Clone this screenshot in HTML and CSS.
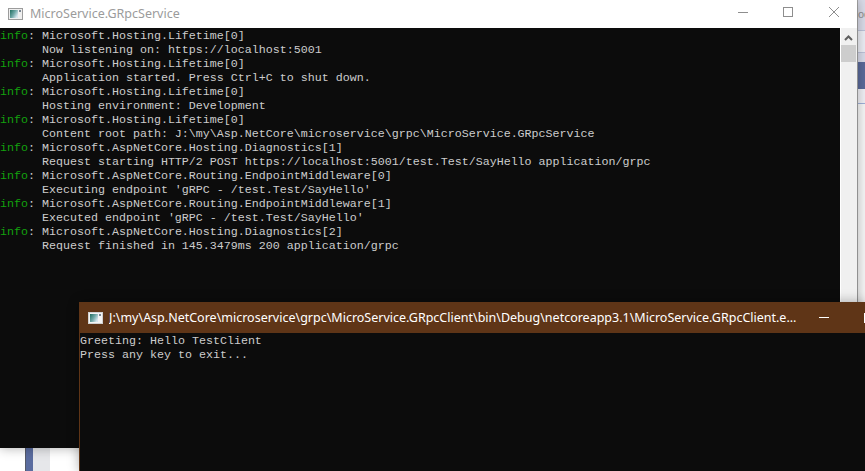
FILE: index.html
```html
<!DOCTYPE html>
<html lang="en">
<head>
<meta charset="utf-8">
<title>Console windows</title>
<link rel="stylesheet" href="styles.css">
</head>
<body>
<div class="desktop">
  <div class="back-strip">
    <span class="back-block block-a"><span class="back-text">oc</span></span>
    <span class="back-block block-b"></span>
    <span class="back-block block-c"></span>
    <span class="back-block block-d"></span>
    <span class="back-block block-e"></span>
  </div>
  <div class="back-bottom">
    <span class="bottom-blue"></span>
    <span class="bottom-grey"></span>
  </div>

  <section class="window service">
    <header class="titlebar service-bar">
      <svg class="app-icon" width="15" height="12" viewBox="0 0 15 12" aria-hidden="true">
        <defs><linearGradient id="icon-a" x1="0" y1="0" x2="1" y2="0.6"><stop offset="0" stop-color="#1f6d5e"/><stop offset="0.55" stop-color="#6fa7a6"/><stop offset="1" stop-color="#d6e6ee"/></linearGradient></defs>
        <rect x="0.5" y="0.5" width="14" height="11" fill="#efefef" stroke="#9c9c9c"/>
        <rect x="2" y="2" width="8" height="8" fill="url(#icon-a)"/>
        <rect x="11" y="2" width="2" height="2" fill="#7b8794"/>
      </svg>
      <span class="title-text">MicroService.GRpcService</span>
      <span class="caption-buttons">
        <svg width="12" height="12" viewBox="0 0 12 12" aria-hidden="true"><path d="M2 6.5H12" stroke="#8e8e8e" fill="none"/></svg>
        <svg width="12" height="12" viewBox="0 0 12 12" aria-hidden="true"><rect x="1.5" y="1.5" width="9" height="9" stroke="#8e8e8e" fill="none"/></svg>
        <svg width="12" height="12" viewBox="0 0 12 12" aria-hidden="true"><path d="M1 1L11 11M11 1L1 11" stroke="#8e8e8e" fill="none"/></svg>
      </span>
    </header>
    <div class="window-body">
      <pre class="console"><span class="info">info</span>: Microsoft.Hosting.Lifetime[0]
      Now listening on: https://localhost:5001
<span class="info">info</span>: Microsoft.Hosting.Lifetime[0]
      Application started. Press Ctrl+C to shut down.
<span class="info">info</span>: Microsoft.Hosting.Lifetime[0]
      Hosting environment: Development
<span class="info">info</span>: Microsoft.Hosting.Lifetime[0]
      Content root path: J:\my\Asp.NetCore\microservice\grpc\MicroService.GRpcService
<span class="info">info</span>: Microsoft.AspNetCore.Hosting.Diagnostics[1]
      Request starting HTTP/2 POST https://localhost:5001/test.Test/SayHello application/grpc
<span class="info">info</span>: Microsoft.AspNetCore.Routing.EndpointMiddleware[0]
      Executing endpoint 'gRPC - /test.Test/SayHello'
<span class="info">info</span>: Microsoft.AspNetCore.Routing.EndpointMiddleware[1]
      Executed endpoint 'gRPC - /test.Test/SayHello'
<span class="info">info</span>: Microsoft.AspNetCore.Hosting.Diagnostics[2]
      Request finished in 145.3479ms 200 application/grpc</pre>
      <div class="scrollbar">
        <svg class="scroll-arrow" width="9" height="7" viewBox="0 0 9 7" aria-hidden="true"><path d="M1 6L4.5 2.5L8 6" stroke="#606060" stroke-width="2" fill="none"/></svg>
        <span class="scroll-thumb"></span>
      </div>
    </div>
  </section>

  <section class="window client">
    <header class="titlebar client-bar">
      <svg class="app-icon" width="15" height="12" viewBox="0 0 15 12" aria-hidden="true">
        <defs><linearGradient id="icon-b" x1="0" y1="0" x2="1" y2="0.6"><stop offset="0" stop-color="#1f6d5e"/><stop offset="0.55" stop-color="#6fa7a6"/><stop offset="1" stop-color="#d6e6ee"/></linearGradient></defs>
        <rect x="0.5" y="0.5" width="14" height="11" fill="#f4f4f4" stroke="#d0d0d0"/>
        <rect x="2" y="2" width="8" height="8" fill="url(#icon-b)"/>
        <rect x="11" y="2" width="2" height="2" fill="#7b8794"/>
      </svg>
      <span class="client-title">J:\my\Asp.NetCore\microservice\grpc\MicroService.GRpcClient\bin\Debug\netcoreapp3.1\MicroService.GRpcClient.e...</span>
      <span class="client-buttons">
        <svg width="12" height="12" viewBox="0 0 12 12" aria-hidden="true"><path d="M1 5.5H11" stroke="#fff" fill="none"/></svg>
        <svg width="12" height="12" viewBox="0 0 12 12" aria-hidden="true"><rect x="1.5" y="1.5" width="9" height="9" stroke="#fff" fill="none"/></svg>
      </span>
    </header>
    <pre class="console client-console">Greeting: Hello TestClient
Press any key to exit...</pre>
  </section>
</div>
</body>
</html>
```

FILE: styles.css
```css
html, body {
  margin: 0;
  padding: 0;
  overflow: hidden;
}

.desktop {
  position: relative;
  width: 865px;
  height: 471px;
  background: #fff;
  overflow: hidden;
}

.back-strip {
  position: absolute;
  top: 0;
  right: 0;
  display: flex;
  flex-direction: column;
  box-sizing: border-box;
  width: 8px;
  height: 302px;
  background: #f6f6f6;
  border-left: 1px solid #aaa;
  overflow: hidden;
}

.back-block {
  display: block;
  flex: none;
  overflow: hidden;
}

.block-a {
  height: 30px;
  background: #d9dbe8;
  border-bottom: 1px solid #bcc2d8;
}

.block-b {
  height: 21px;
  background: #eceef5;
  border-bottom: 1px solid #bcc2d8;
}

.block-c {
  height: 9px;
  background: #d8dbea;
}

.block-d {
  height: 27px;
  background: #5a6a9a;
}

.block-e {
  height: 14px;
  background: #f0f0f5;
  border-bottom: 1px solid #9fb0d8;
}

.back-text {
  display: block;
  margin-top: 8px;
  color: #8e8e8e;
  font: 11px "Liberation Sans", sans-serif;
  white-space: nowrap;
}

.back-bottom {
  position: absolute;
  top: 448px;
  left: 0;
  display: flex;
  box-sizing: border-box;
  width: 79px;
  height: 23px;
  padding-left: 25px;
  background: #fff;
}

.bottom-blue {
  box-sizing: border-box;
  width: 8px;
  background: #5a6c9f;
  border-left: 1px solid #555a68;
}

.bottom-grey {
  width: 17px;
  background: #e6e7ea;
}

.window {
  position: absolute;
  display: flex;
  flex-direction: column;
  box-shadow: 0 0 11px rgba(0, 0, 0, 0.32);
}

.service {
  left: 0;
  top: 0;
  width: 857px;
  height: 448px;
  background: #fff;
}

.titlebar {
  display: flex;
  align-items: center;
  flex: none;
  box-sizing: border-box;
  font-family: "Noto Sans", "Open Sans", sans-serif;
  font-size: 12.5px;
}

.service-bar {
  height: 28px;
  padding: 0 0 1px 8px;
  background: #fff;
}

.app-icon {
  flex: none;
}

.title-text {
  margin-left: 7px;
  color: #9b9b9b;
}

.caption-buttons {
  margin-left: auto;
  display: flex;
  gap: 34px;
  padding: 0 17px 3px 0;
}

.window-body {
  display: flex;
  flex: 1;
  min-height: 0;
}

.console {
  flex: 1;
  margin: 0;
  padding-top: 1px;
  background: #0c0c0c;
  color: #cccccc;
  font-family: "Liberation Mono", "DejaVu Sans Mono", monospace;
  font-size: 11.67px;
  line-height: 14px;
  white-space: pre;
  overflow: hidden;
}

.info {
  color: #13a10e;
}

.scrollbar {
  flex: none;
  display: flex;
  flex-direction: column;
  align-items: flex-start;
  width: 16px;
  margin-left: 1px;
  background: #f0f0f0;
}

.scroll-arrow {
  margin: 6px 0 0 3px;
}

.scroll-thumb {
  width: 15px;
  height: 17px;
  margin-top: 4px;
  background: #cdcdcd;
}

.client {
  left: 79px;
  top: 302px;
  width: 786px;
  height: 169px;
  border-left: 1px solid #5f3517;
  box-sizing: border-box;
}

.client-bar {
  height: 31px;
  padding-left: 8px;
  background: #5f3517;
  color: #fff;
  overflow: hidden;
}

.client-title {
  flex: none;
  width: 689px;
  margin-left: 6px;
  white-space: nowrap;
  overflow: hidden;
}

.client-buttons {
  display: flex;
  gap: 33px;
  margin-left: 20px;
  flex: none;
}
```
